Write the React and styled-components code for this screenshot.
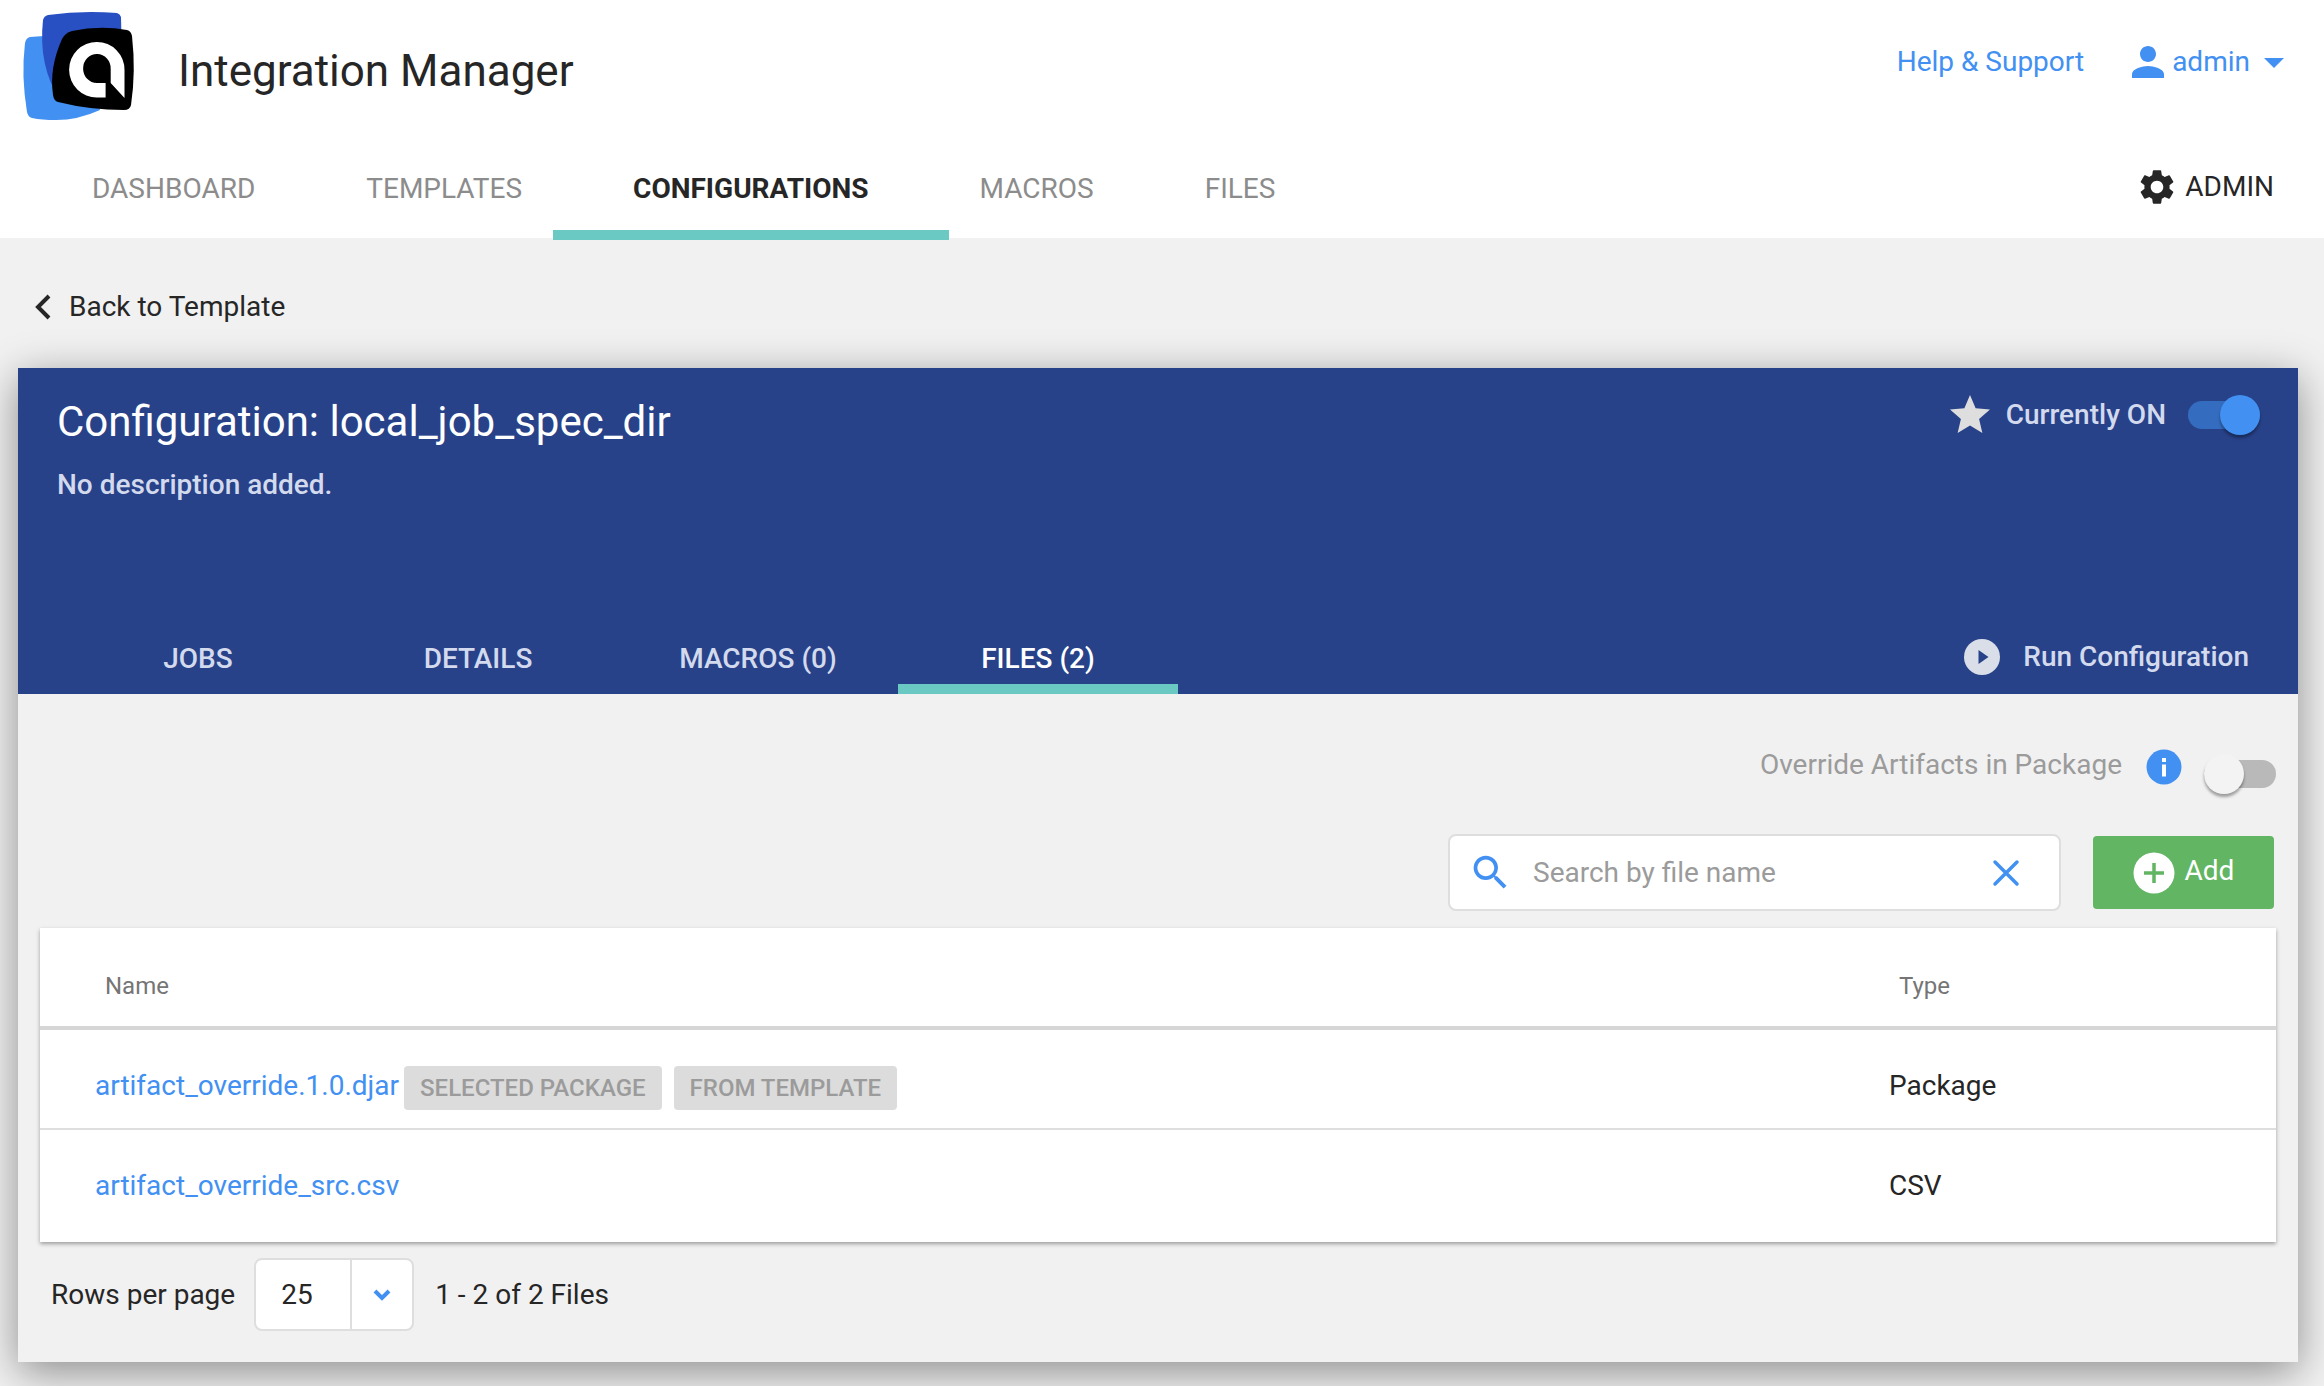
import React, { useState } from "react";
import styled, { createGlobalStyle } from "styled-components";
import { MdArrowDropDown, MdPerson, MdSearch, MdSettings, MdStar } from "react-icons/md";

const GlobalStyle = createGlobalStyle`
  *, *::before, *::after { box-sizing: border-box; }
  body {
    margin: 0;
    background: #f1f1f1;
    color: #262626;
    font-family: Roboto, "Liberation Sans", sans-serif;
    font-size: 28px;
    line-height: 32px;
  }
  a { color: inherit; text-decoration: none; }
  button, input, select { font: inherit; color: inherit; }
  svg { display: block; flex: none; }
`;

const Header = styled.header`
  display: flow-root;
  background: #fff;
`;

const TopRow = styled.div`
  display: flex;
  align-items: flex-start;
  padding: 10px 26px 0 20px;
`;

const Title = styled.h1`
  margin: 35px auto 0 42px;
  font-size: 44px;
  line-height: 52px;
  font-weight: 400;
`;

const UserLinks = styled.div`
  display: flex;
  align-items: center;
  gap: 40px;
  height: 48px;
  margin-top: 28px;
  color: #4190f2;
`;

const UserButton = styled.button`
  display: flex;
  align-items: center;
  padding: 0;
  border: 0;
  background: none;
  cursor: pointer;
`;

const NavRow = styled.div`
  display: flex;
  align-items: flex-start;
  justify-content: space-between;
  margin-top: 10px;
  margin-bottom: -2px;
  padding: 0 50px 0 12px;
`;

const Nav = styled.nav`
  display: flex;
`;

const NavLink = styled.a`
  margin-right: -49px;
  padding: 41px 80px 25px;
  border-bottom: 10px solid ${(p) => (p.$active ? "#6bc9c3" : "transparent")};
  color: ${(p) => (p.$active ? "#262626" : "#8c8c8c")};
  font-weight: ${(p) => (p.$active ? 700 : 400)};
`;

const AdminLink = styled.a`
  display: flex;
  align-items: center;
  gap: 7px;
  margin-top: 34px;
`;

const Main = styled.main`
  padding: 53px 26px 24px 18px;
`;

const BackLink = styled.a`
  display: inline-flex;
  align-items: center;
  gap: 17px;
  margin-bottom: 45px;
  padding-left: 16px;
`;

const Card = styled.section`
  background: #f1f1f1;
  box-shadow: 0 10px 40px rgba(0, 0, 0, 0.42);
`;

const CardHeader = styled.div`
  display: flex;
  justify-content: space-between;
  background: #284289;
  color: #d3daee;
  font-weight: 500;
`;

const HeaderColumn = styled.div`
  display: flex;
  flex-direction: column;
  justify-content: space-between;
  gap: 142px;
`;

const Heading = styled.div`
  padding: 30px 0 0 39px;
`;

const CardTitle = styled.h2`
  margin: 0 0 23px;
  color: #fff;
  font-size: 42px;
  line-height: 48px;
  font-weight: 400;
`;

const Description = styled.p`
  margin: 0;
`;

const Tabs = styled.div`
  display: flex;
  padding-left: 40px;
`;

const Tab = styled.button`
  width: 280px;
  padding: 0 0 9px;
  border: 0;
  border-bottom: 10px solid ${(p) => (p.$active ? "#6bc9c3" : "transparent")};
  background: none;
  color: ${(p) => (p.$active ? "#fff" : "#d3daee")};
  font-weight: 500;
  cursor: pointer;
`;

const Status = styled.div`
  display: flex;
  align-items: center;
  padding: 23px 38px 0 0;
`;

const StatusLabel = styled.label`
  margin: 0 22px 0 12px;
`;

const RunButton = styled.button`
  display: flex;
  align-items: center;
  gap: 22px;
  margin: 0 49px 18px auto;
  padding: 0;
  border: 0;
  background: none;
  font-weight: 500;
  cursor: pointer;
`;

const Switch = styled.input`
  appearance: none;
  display: flex;
  flex: none;
  align-items: center;
  width: 72px;
  height: 28px;
  margin: 0;
  border-radius: 14px;
  background: #b9b9b9;
  cursor: pointer;

  &::before {
    content: "";
    flex: none;
    width: 40px;
    height: 40px;
    border-radius: 50%;
    background: #f3f3f3;
    box-shadow: 0 3px 3px rgba(0, 0, 0, 0.35);
  }

  &:checked {
    justify-content: flex-end;
    background: #346dc0;
  }

  &:checked::before {
    background: #4190f2;
  }
`;

const CardBody = styled.div`
  padding: 55px 22px 31px;
`;

const OverrideRow = styled.div`
  display: flex;
  align-items: flex-start;
  justify-content: flex-end;
  height: 85px;
  color: #9b9b9b;
`;

const InfoButton = styled.button`
  margin: 0 22px 0 24px;
  padding: 0;
  border: 0;
  background: none;
  cursor: pointer;
`;

const SwitchSlot = styled.div`
  padding-top: 11px;
`;

const Toolbar = styled.div`
  display: flex;
  align-items: center;
  justify-content: flex-end;
  gap: 32px;
  margin-bottom: 17px;
  padding-right: 2px;
`;

const SearchBox = styled.div`
  display: flex;
  align-items: center;
  width: 613px;
  height: 77px;
  padding: 0 39px 0 18px;
  border: 2px solid #dedede;
  border-radius: 8px;
  background: #fff;
  color: #4190f2;
`;

const SearchInput = styled.input`
  flex: 1;
  min-width: 0;
  margin-left: 20px;
  padding: 0;
  border: 0;
  outline: 0;
  background: none;
  color: #262626;

  &::placeholder {
    color: #9b9b9b;
    opacity: 1;
  }
`;

const ClearButton = styled.button`
  padding: 0;
  border: 0;
  background: none;
  cursor: pointer;
`;

const AddButton = styled.button`
  display: flex;
  align-items: center;
  justify-content: center;
  gap: 10px;
  width: 181px;
  height: 73px;
  padding: 0;
  border: 0;
  border-radius: 4px;
  background: #61b563;
  color: #fff;
  cursor: pointer;
`;

const AddLabel = styled.span`
  padding-bottom: 4px;
`;

const FileTable = styled.table`
  width: 100%;
  border-spacing: 0;
  background: #fff;
  box-shadow: 0 2px 4px rgba(0, 0, 0, 0.35);
`;

const HeadCell = styled.th`
  width: ${(p) => p.$width || "auto"};
  padding: 42px 0 24px 65px;
  border-bottom: 4px solid #d6d6d6;
  color: #757575;
  font-size: 24px;
  font-weight: 400;
  text-align: left;
`;

const Row = styled.tr`
  height: 100px;

  &:last-child {
    height: 112px;
  }

  &:not(:last-child) > td {
    border-bottom: 2px solid #dedede;
  }
`;

const Cell = styled.td`
  padding: 36px 0 0 55px;
  vertical-align: top;
  line-height: 40px;
`;

const FileLine = styled.div`
  display: flex;
  align-items: flex-start;
  gap: 12px;
`;

const FileLink = styled.a`
  margin-right: -7px;
  color: #4190f2;
`;

const Badge = styled.span`
  padding: 0 16px;
  border-radius: 4px;
  background: #dcdcdc;
  color: #9b9b9b;
  font-size: 24px;
  line-height: 44px;
  font-weight: 500;
`;

const Pager = styled.div`
  display: flex;
  align-items: center;
  margin-top: 16px;
  padding-left: 11px;
`;

const SelectBox = styled.div`
  display: grid;
  width: 160px;
  height: 73px;
  margin: 0 21px 0 19px;
  border: 2px solid #dedede;
  border-radius: 8px;
  background: #fff;

  & > * {
    grid-area: 1 / 1;
  }
`;

const Select = styled.select`
  appearance: none;
  padding: 0 0 0 25px;
  border: 0;
  outline: 0;
  background: none;
  cursor: pointer;
`;

const SelectArrow = styled.span`
  display: flex;
  align-items: center;
  justify-content: center;
  justify-self: end;
  width: 62px;
  border-left: 2px solid #dedede;
  pointer-events: none;
`;

const Logo = () => (
  <svg width="116" height="112" viewBox="20 10 116 112" role="img" aria-label="Logo">
    <path
      fill="#4190f2"
      d="M30 37 Q50 35 80 36 L100 110 Q78 120 56 120 Q42 120 32 118 Q28 117 27 112 Q21 76 25 43 Q26 38 30 37Z"
    />
    <path
      fill="#2850c2"
      d="M48 15 Q82 10 117 13 Q120 14 121 17 L122 60 L60 100 Q38 66 43 20 Q44 16 48 15Z"
    />
    <path
      fill="#000"
      d="M72 31 Q100 25 127 30 Q131 31 132 36 Q136 72 131 105 Q130 110 124 110 Q90 110 58 102 Q54 101 53 95 Q49 68 62 39 Q65 33 72 31Z"
    />
    <path
      fill="#fff"
      d="M105.6 97.5 H97 A27.7 27.8 0 1 1 124.5 70 V98 L110.7 83 V69 A13.8 14.5 0 1 0 97 83 H105.6Z"
    />
  </svg>
);

const BackIcon = () => (
  <svg width="18" height="26" viewBox="0 0 18 26" fill="none" stroke="#262626" strokeWidth="4">
    <path d="M15 2 L4 13 L15 24" />
  </svg>
);

const PlayIcon = () => (
  <svg width="38" height="38" viewBox="0 0 38 38">
    <circle cx="19" cy="19" r="18" fill="#d9dee9" />
    <path d="M15.5 12 L25.5 19 L15.5 26Z" fill="#284289" />
  </svg>
);

const InfoIcon = () => (
  <svg width="36" height="36" viewBox="0 0 36 36">
    <circle cx="18" cy="18" r="17.5" fill="#4190f2" />
    <rect x="16" y="9" width="4" height="4" fill="#fff" />
    <rect x="16" y="15.5" width="4" height="12" fill="#fff" />
  </svg>
);

const ClearIcon = () => (
  <svg
    width="28"
    height="28"
    viewBox="0 0 28 28"
    fill="none"
    stroke="#4190f2"
    strokeWidth="3.5"
    strokeLinecap="round"
  >
    <path d="M3 3 L25 25 M25 3 L3 25" />
  </svg>
);

const PlusIcon = () => (
  <svg width="42" height="42" viewBox="0 0 42 42">
    <circle cx="21" cy="21" r="20.5" fill="#fff" />
    <path d="M21 11 V31 M11 21 H31" stroke="#61b563" strokeWidth="3.5" />
  </svg>
);

const ChevronIcon = () => (
  <svg width="18" height="14" viewBox="0 0 18 14" fill="none" stroke="#4190f2" strokeWidth="4">
    <path d="M2 3 L9 10 L16 3" />
  </svg>
);

const NAV = ["DASHBOARD", "TEMPLATES", "CONFIGURATIONS", "MACROS", "FILES"];
const TABS = ["JOBS", "DETAILS", "MACROS (0)", "FILES (2)"];
const FILES = [
  {
    name: "artifact_override.1.0.djar",
    type: "Package",
    badges: ["SELECTED PACKAGE", "FROM TEMPLATE"],
  },
  { name: "artifact_override_src.csv", type: "CSV", badges: [] },
];

export default function App() {
  const [tab, setTab] = useState("FILES (2)");
  const [enabled, setEnabled] = useState(true);
  const [override, setOverride] = useState(false);
  const [query, setQuery] = useState("");
  const files = FILES.filter((file) => file.name.includes(query));

  return (
    <>
      <GlobalStyle />
      <Header>
        <TopRow>
          <Logo />
          <Title>Integration Manager</Title>
          <UserLinks>
            <a href="#help">Help &amp; Support</a>
            <UserButton type="button">
              <MdPerson size={48} />
              admin
              <MdArrowDropDown size={48} />
            </UserButton>
          </UserLinks>
        </TopRow>
        <NavRow>
          <Nav>
            {NAV.map((item) => (
              <NavLink
                key={item}
                href={"#" + item.toLowerCase()}
                $active={item === "CONFIGURATIONS"}
              >
                {item}
              </NavLink>
            ))}
          </Nav>
          <AdminLink href="#admin">
            <MdSettings size={42} />
            ADMIN
          </AdminLink>
        </NavRow>
      </Header>
      <Main>
        <BackLink href="#templates">
          <BackIcon />
          Back to Template
        </BackLink>
        <Card>
          <CardHeader>
            <HeaderColumn>
              <Heading>
                <CardTitle>Configuration: local_job_spec_dir</CardTitle>
                <Description>No description added.</Description>
              </Heading>
              <Tabs role="tablist">
                {TABS.map((item) => (
                  <Tab
                    key={item}
                    type="button"
                    role="tab"
                    aria-selected={item === tab}
                    $active={item === tab}
                    onClick={() => setTab(item)}
                  >
                    {item}
                  </Tab>
                ))}
              </Tabs>
            </HeaderColumn>
            <HeaderColumn>
              <Status>
                <MdStar size={48} color="#dedede" />
                <StatusLabel htmlFor="enabled">Currently ON</StatusLabel>
                <Switch
                  id="enabled"
                  type="checkbox"
                  checked={enabled}
                  onChange={(e) => setEnabled(e.target.checked)}
                />
              </Status>
              <RunButton type="button">
                <PlayIcon />
                Run Configuration
              </RunButton>
            </HeaderColumn>
          </CardHeader>
          <CardBody>
            <OverrideRow>
              <label htmlFor="override">Override Artifacts in Package</label>
              <InfoButton type="button" aria-label="About overriding artifacts">
                <InfoIcon />
              </InfoButton>
              <SwitchSlot>
                <Switch
                  id="override"
                  type="checkbox"
                  checked={override}
                  onChange={(e) => setOverride(e.target.checked)}
                />
              </SwitchSlot>
            </OverrideRow>
            <Toolbar>
              <SearchBox>
                <MdSearch size={45} />
                <SearchInput
                  type="text"
                  aria-label="Search by file name"
                  placeholder="Search by file name"
                  value={query}
                  onChange={(e) => setQuery(e.target.value)}
                />
                <ClearButton type="button" aria-label="Clear search" onClick={() => setQuery("")}>
                  <ClearIcon />
                </ClearButton>
              </SearchBox>
              <AddButton type="button">
                <PlusIcon />
                <AddLabel>Add</AddLabel>
              </AddButton>
            </Toolbar>
            <FileTable>
              <thead>
                <tr>
                  <HeadCell scope="col">Name</HeadCell>
                  <HeadCell scope="col" $width="442px">
                    Type
                  </HeadCell>
                </tr>
              </thead>
              <tbody>
                {files.map((file) => (
                  <Row key={file.name}>
                    <Cell>
                      <FileLine>
                        <FileLink href={"#" + file.name}>{file.name}</FileLink>
                        {file.badges.map((badge) => (
                          <Badge key={badge}>{badge}</Badge>
                        ))}
                      </FileLine>
                    </Cell>
                    <Cell>{file.type}</Cell>
                  </Row>
                ))}
              </tbody>
            </FileTable>
            <Pager>
              <label htmlFor="rows">Rows per page</label>
              <SelectBox>
                <Select id="rows" defaultValue="25">
                  <option value="25">25</option>
                  <option value="50">50</option>
                  <option value="100">100</option>
                </Select>
                <SelectArrow>
                  <ChevronIcon />
                </SelectArrow>
              </SelectBox>
              <span>1 - 2 of 2 Files</span>
            </Pager>
          </CardBody>
        </Card>
      </Main>
    </>
  );
}
